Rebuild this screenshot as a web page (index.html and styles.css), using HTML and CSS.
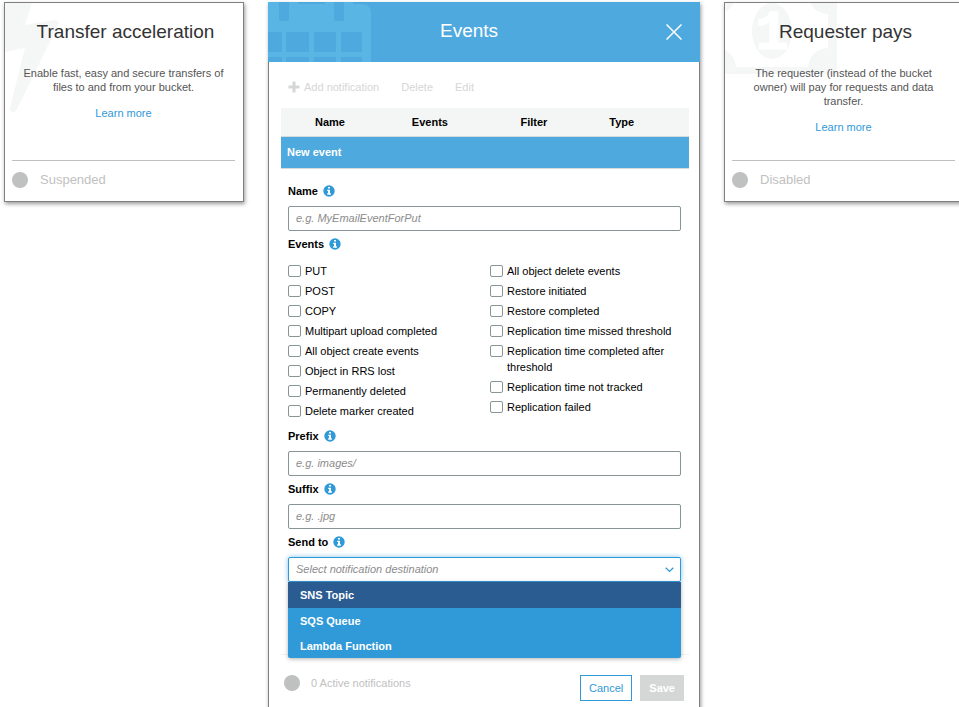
FILE: index.html
```html
<!DOCTYPE html>
<html lang="en">
<head>
    <meta charset="UTF-8">
    <meta name="viewport" content="width=device-width, initial-scale=1.0">
    <title>Bucket properties</title>
    <link rel="stylesheet" href="styles.css">
</head>
<body>
    <!-- info icon shared by the field labels -->
    <svg class="sprite" width="0" height="0" aria-hidden="true">
        <symbol id="info" viewBox="0 0 12 12">
            <circle cx="6" cy="6" r="5.7" fill="#3099d8"/>
            <path d="M5 2h2v1.6H5zM4.2 4.7H7v3.6h.9v1.4H4.2V8.3H5V6.1h-.8z" fill="#fff"/>
        </symbol>
    </svg>

    <main class="board">
        <section class="card">
            <svg class="card-art" width="60" height="112" viewBox="0 0 60 112" aria-hidden="true">
                <path d="M0 0H27L20 22L49 17Q55 17 53 22L12 106Q11 109 8 109Q4 109 5 105L20 45L0 49Z" fill="#f5f7f7"/>
            </svg>
            <h2>Transfer acceleration</h2>
            <p>Enable fast, easy and secure transfers of files to and from your bucket.</p>
            <a href="#">Learn more</a>
            <div class="status"><span class="dot"></span>Suspended</div>
        </section>

        <section class="panel">
            <header class="panel-header">
                <svg class="panel-art" width="104" height="60" viewBox="0 0 104 60" aria-hidden="true">
                    <path d="M0 0H30V2H57V0H85V2H94Q103 2 103 11V60H0Z" fill="#58b5e4"/>
                    <path d="M11 0H21V17Q21 19 19 19H13Q11 19 11 17ZM66 0H76V17Q76 19 74 19H68Q66 19 66 17ZM0 30H14V50H0ZM18 30H41V50H18ZM46 30H68V50H46ZM73 30H94V50H73ZM0 55H14V60H0ZM18 55H41V60H18ZM46 55H68V60H46ZM73 55H94V60H73Z" fill="#4ea9de"/>
                </svg>
                <h2>Events</h2>
                <button class="close-btn" aria-label="Close">
                    <svg width="16" height="16" viewBox="0 0 16 16"><path d="M.5 .5L15.5 15.5M15.5 .5L.5 15.5" stroke="#fff" stroke-width="1.5"/></svg>
                </button>
            </header>

            <div class="panel-body">
                <div class="toolbar">
                    <button disabled>
                        <svg width="12" height="12" viewBox="0 0 12 12"><path d="M4.5 .5h3v4h4v3h-4v4h-3v-4h-4v-3h4z" fill="#d5d7d7"/></svg>
                        Add notification
                    </button>
                    <button disabled>Delete</button>
                    <button disabled>Edit</button>
                </div>

                <table class="events-table">
                    <colgroup>
                        <col class="col-name"><col class="col-events"><col class="col-filter"><col class="col-type"><col>
                    </colgroup>
                    <thead>
                        <tr><th>Name</th><th>Events</th><th>Filter</th><th>Type</th><th></th></tr>
                    </thead>
                    <tbody>
                        <tr><td colspan="5">New event</td></tr>
                    </tbody>
                </table>

                <form class="event-form">
                    <div class="field">
                        <label for="name">Name <svg class="info"><use href="#info"/></svg></label>
                        <input type="text" id="name" placeholder="e.g. MyEmailEventForPut">
                    </div>

                    <fieldset>
                        <legend>Events <svg class="info"><use href="#info"/></svg></legend>
                        <div class="checks">
                            <div class="check-col">
                                <label><input type="checkbox">PUT</label>
                                <label><input type="checkbox">POST</label>
                                <label><input type="checkbox">COPY</label>
                                <label><input type="checkbox">Multipart upload completed</label>
                                <label><input type="checkbox">All object create events</label>
                                <label><input type="checkbox">Object in RRS lost</label>
                                <label><input type="checkbox">Permanently deleted</label>
                                <label><input type="checkbox">Delete marker created</label>
                            </div>
                            <div class="check-col">
                                <label><input type="checkbox">All object delete events</label>
                                <label><input type="checkbox">Restore initiated</label>
                                <label><input type="checkbox">Restore completed</label>
                                <label><input type="checkbox">Replication time missed threshold</label>
                                <label><input type="checkbox">Replication time completed after threshold</label>
                                <label><input type="checkbox">Replication time not tracked</label>
                                <label><input type="checkbox">Replication failed</label>
                            </div>
                        </div>
                    </fieldset>

                    <div class="field">
                        <label for="prefix">Prefix <svg class="info"><use href="#info"/></svg></label>
                        <input type="text" id="prefix" placeholder="e.g. images/">
                    </div>
                    <div class="field">
                        <label for="suffix">Suffix <svg class="info"><use href="#info"/></svg></label>
                        <input type="text" id="suffix" placeholder="e.g. .jpg">
                    </div>
                    <div class="field">
                        <label for="destination">Send to <svg class="info"><use href="#info"/></svg></label>
                        <div class="dropdown">
                            <select id="destination">
                                <option>Select notification destination</option>
                            </select>
                            <svg class="chevron" width="9" height="6" viewBox="0 0 9 6" aria-hidden="true"><path d="M.7 .8L4.5 4.4L8.3 .8" fill="none" stroke="#3099d8" stroke-width="1.3"/></svg>
                            <ul class="menu" role="listbox" aria-label="Send to">
                                <li class="active" role="option" aria-selected="true">SNS Topic</li>
                                <li role="option">SQS Queue</li>
                                <li role="option">Lambda Function</li>
                            </ul>
                        </div>
                    </div>
                </form>

                <footer class="panel-footer">
                    <span class="dot"></span>
                    <span class="count">0 Active notifications</span>
                    <button class="cancel-btn">Cancel</button>
                    <button class="save-btn" disabled>Save</button>
                </footer>
            </div>
        </section>

        <section class="card">
            <svg class="card-art" width="112" height="71" viewBox="0 0 112 71" aria-hidden="true">
                <g fill="#f5f7f7">
                    <path d="M103 0H112V71H0V64H103Z"/>
                    <circle cx="-9" cy="65" r="20"/>
                    <circle cx="-9" cy="-9" r="20"/>
                    <circle cx="103" cy="65" r="20"/>
                    <circle cx="103" cy="-9" r="20"/>
                    <ellipse cx="47" cy="28" rx="20" ry="28"/>
                </g>
                <text class="note-value" x="47" y="46" text-anchor="middle">1</text>
            </svg>
            <h2>Requester pays</h2>
            <p>The requester (instead of the bucket owner) will pay for requests and data transfer.</p>
            <a href="#">Learn more</a>
            <div class="status"><span class="dot"></span>Disabled</div>
        </section>
    </main>
</body>
</html>
```
FILE: styles.css
```css
* {
    box-sizing: border-box;
}

html {
    overflow: hidden;
}

body {
    margin: 0;
    font-family: "Liberation Sans", Arial, sans-serif;
    font-size: 11px;
    line-height: 16px;
    color: #000;
    background: #fff;
}

button,
input,
select {
    font: inherit;
}

h2 {
    margin: 0;
    font-weight: normal;
    font-size: 19px;
    line-height: 24px;
    text-align: center;
}

.sprite {
    display: block;
}

/* three columns, the last one runs off the right edge */
.board {
    display: grid;
    grid-template-columns: 5fr 9fr 5fr;
    gap: 24px;
    align-items: start;
    height: 100vh;
    padding: 2px 0 0 4px;
    margin-right: -5px;
    overflow: hidden;
}

/* cards */
.card {
    position: relative;
    display: flex;
    flex-direction: column;
    min-height: 200px;
    padding: 17px 8px 13px 7px;
    border: 1px solid #808080;
    box-shadow: 1px 2px 4px rgba(0,0,0,0.4);
    text-align: center;
}

.card-art {
    position: absolute;
    top: 0;
    left: 0;
}

.note-value {
    font-family: "Liberation Mono", monospace;
    font-weight: bold;
    font-size: 56px;
    fill: #fff;
    stroke: #fff;
    stroke-width: 1px;
}

.card h2,
.card p,
.card a {
    position: relative;
}

.card h2 {
    padding-left: 4px;
    color: #333;
}

.card p {
    margin: 22px 8px 12px;
    line-height: 14px;
    color: #555;
}

.card a {
    line-height: 14px;
    color: #3099d8;
    text-decoration: none;
}

.status {
    display: flex;
    align-items: center;
    gap: 12px;
    margin-top: auto;
    padding-top: 11px;
    border-top: 1px solid #bfc1c1;
    font-size: 13px;
    color: #bfc1c1;
}

.dot {
    width: 16px;
    height: 16px;
    border-radius: 50%;
    background: #bfc1c1;
}

/* events panel */
.panel {
    box-shadow: 1px 2px 4px rgba(0,0,0,0.4);
}

.panel-header {
    position: relative;
    padding: 17px 30px 19px 0;
    background: #4ea9de;
    color: #fff;
}

.panel-art {
    position: absolute;
    top: 0;
    left: 0;
}

.panel-header h2 {
    position: relative;
}

.close-btn {
    position: absolute;
    top: 22px;
    right: 18px;
    height: 16px;
    padding: 0;
    border: none;
    background: none;
}

.close-btn svg {
    display: block;
}

.panel-body {
    padding: 17px 10px 20px 12px;
    border: 1px solid #808080;
    border-top: none;
}

.toolbar {
    display: flex;
    gap: 22px;
    padding-left: 7px;
    margin-bottom: 13px;
}

.toolbar button {
    display: flex;
    align-items: center;
    gap: 4px;
    padding: 0;
    border: none;
    background: none;
    color: #d5d7d7;
}

.events-table {
    width: 100%;
    table-layout: fixed;
    border-collapse: collapse;
}

.col-name { width: 24%; }
.col-events { width: 25%; }
.col-filter { width: 26%; }
.col-type { width: 17%; }

.events-table th {
    padding: 6px 0;
    background: #f4f6f6;
}

.events-table tr {
    border-bottom: 1px solid #d5dbdb;
}

.events-table td {
    padding: 7px 6px 8px;
    background: #4ea9de;
    color: #fff;
    font-weight: bold;
}

/* form */
.event-form {
    padding: 14px 8px 72px 7px;
    border-bottom: 1px solid #f0f2f2;
}

.field {
    margin-bottom: 5px;
}

.field:last-child {
    margin-bottom: 0;
}

.field > label,
legend {
    display: flex;
    align-items: center;
    gap: 5px;
    padding: 0;
    margin-bottom: 7px;
    font-weight: bold;
}

.info {
    width: 12px;
    height: 12px;
}

.field input,
.field select {
    display: block;
    width: 100%;
    height: 25px;
    padding: 0 7px 2px;
    border: 1px solid #879596;
    border-radius: 2px;
    background: #fff;
}

.field input::placeholder {
    font-style: italic;
    color: #8c8c8c;
}

.field select {
    appearance: none;
    border-color: #3099d8;
    box-shadow: 0 0 5px rgba(48,153,216,0.6);
    font-style: italic;
    color: #8c8c8c;
}

fieldset {
    min-width: 0;
    padding: 0;
    margin: 0 0 9px;
    border: none;
}

.checks {
    display: grid;
    grid-template-columns: 1fr 1fr;
    column-gap: 11px;
    padding-top: 4px;
}

.check-col {
    display: flex;
    flex-direction: column;
    gap: 4px;
}

.check-col label {
    display: flex;
    gap: 4px;
}

.check-col input {
    appearance: none;
    flex: none;
    width: 13px;
    height: 12px;
    margin: 2px 0 0;
    border: 1px solid #879596;
    border-radius: 2px;
    background: #fff;
}

.check-col input:checked {
    background: #3099d8;
}

.dropdown {
    position: relative;
}

.chevron {
    position: absolute;
    top: 10px;
    right: 7px;
    pointer-events: none;
}

.menu {
    position: absolute;
    top: 100%;
    left: 0;
    right: 0;
    margin: 0;
    padding: 0;
    list-style: none;
    background: #3099d8;
    border-radius: 0 0 2px 2px;
    box-shadow: 0 1px 4px rgba(0,0,0,0.3);
    color: #fff;
    font-weight: bold;
}

.menu li {
    padding: 5px 12px 4px;
}

.menu .active {
    padding-bottom: 5px;
    background: #2a5b91;
}

/* footer */
.panel-footer {
    display: flex;
    align-items: flex-start;
    padding: 20px 5px 0 3px;
    color: #bfc1c1;
}

.count {
    flex: 1;
    margin-left: 11px;
}

.panel-footer button {
    height: 26px;
    padding: 0 8px;
    border: 1px solid #3099d8;
    background: #fff;
    color: #3099d8;
}

.panel-footer .save-btn {
    margin-left: 8px;
    border-color: #d5d7d7;
    background: #d5d7d7;
    color: #fff;
    font-weight: bold;
}
```
